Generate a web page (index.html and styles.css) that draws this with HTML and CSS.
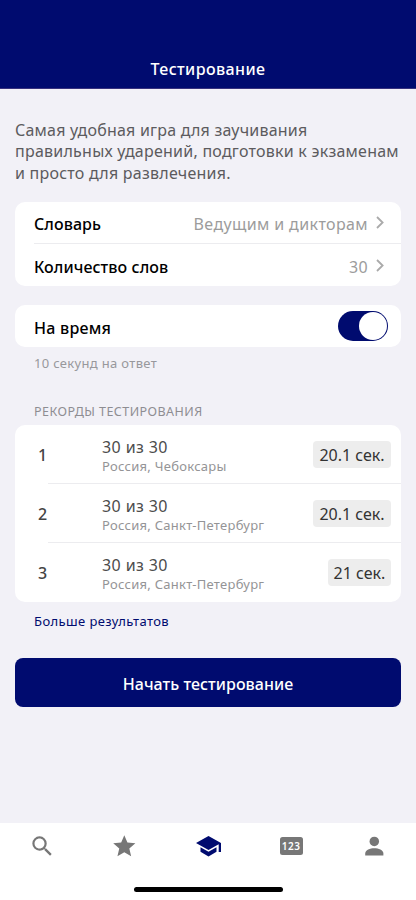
FILE: index.html
```html
<!DOCTYPE html>
<html lang="ru">
<head>
<meta charset="utf-8">
<meta name="viewport" content="width=device-width, initial-scale=1">
<title>Тестирование</title>
<link rel="stylesheet" href="styles.css">
</head>
<body>
<header class="header"><h1 class="title">Тестирование</h1></header>
<main class="content">
  <p class="intro"><span class="l1">Самая удобная игра для заучивания</span><br><span class="l2">правильных ударений, подготовки к экзаменам</span><br><span class="l3">и просто для развлечения.</span></p>
  <section class="card settings">
    <div class="row"><span class="label">Словарь</span><span class="value">Ведущим и дикторам</span><svg class="chevron" viewBox="0 0 8 13"><path d="M1 1l5.6 5.5L1 12"/></svg></div>
    <div class="row"><span class="label">Количество слов</span><span class="value">30</span><svg class="chevron" viewBox="0 0 8 13"><path d="M1 1l5.6 5.5L1 12"/></svg></div>
  </section>
  <section class="card timed"><span class="label time">На время</span><span class="switch"><span class="knob"></span></span></section>
  <p class="hint">10 секунд на ответ</p>
  <h2 class="heading">РЕКОРДЫ ТЕСТИРОВАНИЯ</h2>
  <section class="card records">
    <div class="record"><span class="rank">1</span><div class="result"><div class="score">30 из 30</div><div class="place">Россия, Чебоксары</div></div><span class="badge">20.1 сек.</span></div>
    <div class="record"><span class="rank">2</span><div class="result"><div class="score">30 из 30</div><div class="place">Россия, Санкт-Петербург</div></div><span class="badge">20.1 сек.</span></div>
    <div class="record"><span class="rank">3</span><div class="result"><div class="score">30 из 30</div><div class="place">Россия, Санкт-Петербург</div></div><span class="badge short">21 сек.</span></div>
  </section>
  <a class="more">Больше результатов</a>
  <button class="start">Начать тестирование</button>
</main>
<nav class="tabs">
  <div class="tab-row">
    <span class="tab"><svg viewBox="0 0 24 24"><path d="M15.5 14h-.79l-.28-.27A6.47 6.47 0 0 0 16 9.5 6.5 6.5 0 1 0 9.5 16c1.61 0 3.09-.59 4.23-1.57l.27.28v.79l5 4.99L20.49 19l-4.99-5zm-6 0C7.01 14 5 11.99 5 9.5S7.01 5 9.5 5 14 7.01 14 9.5 11.99 14 9.5 14z"/></svg></span>
    <span class="tab"><svg viewBox="0 0 24 24"><path d="M12 17.27L18.18 21l-1.64-7.03L22 9.24l-7.19-.61L12 2 9.19 8.63 2 9.24l5.46 4.73L5.82 21z"/></svg></span>
    <span class="tab active"><svg viewBox="0 0 25 21"><path d="M12.5 0L0 7l12.5 7 10.2-5.7V16H25V7zM4.5 11.3v4.5l8 4.7 8-4.7v-4.5l-8 4.5z"/></svg></span>
    <span class="tab"><span class="digits">123</span></span>
    <span class="tab"><svg viewBox="0 0 24 24"><circle cx="12" cy="7.6" r="4.3"/><path d="M3.8 20.3v-1.8c0-3.1 4.4-4.7 8.2-4.7s8.2 1.6 8.2 4.7v1.8z"/></svg></span>
  </div>
  <div class="home"></div>
</nav>
</body>
</html>
```
FILE: styles.css
```css
* { box-sizing: border-box; }
body {
  margin: 0;
  height: 900px;
  display: flex;
  flex-direction: column;
  background: #f2f1f7;
  font-family: "Noto Sans", sans-serif;
  font-size: 16px;
  overflow: hidden;
}
h1, h2, p { margin: 0; }
.header {
  height: 89px;
  padding-top: 57px;
  background: #000b6f;
  border-bottom: 1px solid #37327e;
  color: #fff;
  text-align: center;
}
.title { font-size: 16px; line-height: 24px; font-weight: 500; letter-spacing: .4px; }
.content { flex: 1; padding: 31px 15px 0; display: flex; flex-direction: column; }
.intro { color: #5c5b5e; font-size: 16px; line-height: 21.4px; height: 82px; font-weight: 400; letter-spacing: .24px; white-space: nowrap; }
.l1 { letter-spacing: .21px; }
.card { background: #fff; border-radius: 10px; flex: none; }
.settings { height: 84px; padding-left: 19px; }
.row { height: 42px; display: flex; align-items: center; padding: 2px 17px 0 0; }
.row + .row { height: 43px; margin-top: -1px; padding-top: 3px; border-top: 1px solid #ececef; }
.label { color: #000; font-size: 16px; font-weight: 500; letter-spacing: .08px; line-height: 22px; white-space: nowrap; }
.value { margin-left: auto; color: #9c9c9c; font-size: 16px; letter-spacing: .38px; white-space: nowrap; }
.chevron { width: 8px; height: 13px; margin: -4px 0 0 8px; fill: none; stroke: #aaa; stroke-width: 1.8; }
.row + .row .chevron { margin-top: -3px; }
.timed { height: 42px; margin-top: 19px; padding: 0 13px 0 19px; display: flex; align-items: center; justify-content: space-between; }
.time { padding-top: 3px; letter-spacing: .25px; }
.switch { width: 50px; height: 30px; border-radius: 15px; background: #000b6f; display: flex; justify-content: flex-end; padding: 1px; }
.knob { width: 28px; height: 28px; border-radius: 50%; background: #fff; }
.hint { margin: 7px 0 0 19px; font-size: 13px; line-height: 18px; letter-spacing: .33px; color: #98989c; }
.heading { margin: 30px 0 4px 19px; font-size: 12.5px; line-height: 19px; font-weight: 400; letter-spacing: .45px; color: #8e8d92; }
.records { height: 177px; }
.record { height: 59px; display: flex; align-items: center; padding: 2px 10px 0 23px; background: linear-gradient(#ececef, #ececef) 33px 100% / 100% 1px no-repeat; }
.record:last-child { background: none; }
.rank { width: 64px; margin-top: -2px; color: #444; font-weight: 500; }
.score { font-size: 16px; line-height: 20px; color: #4c4c4c; letter-spacing: .4px; }
.place { font-size: 13px; line-height: 18px; letter-spacing: .27px; color: #949496; white-space: nowrap; }
.badge { margin: -3px 0 0 auto; width: 78px; height: 27px; border-radius: 4px; background: #ededed; color: #333; font-size: 16px; letter-spacing: 0; line-height: 29px; text-align: center; white-space: nowrap; }
.badge.short { width: 63px; }
.more { margin: 10px 0 0 19px; color: #000b6f; font-size: 13px; line-height: 18px; letter-spacing: .4px; }
.start { margin: 28px 0 0; height: 49px; border: 0; border-radius: 8px; background: #000b6f; color: #fff; font: 500 16px/24px "Noto Sans", sans-serif; letter-spacing: .05px; padding: 2px 0 0; }
.tabs { height: 77px; background: #fff; display: flex; flex-direction: column; align-items: center; }
.tab-row { width: 100%; height: 47px; display: grid; grid-template-columns: repeat(5, 1fr); }
.tab { display: flex; align-items: center; justify-content: center; color: #777; }
.tab svg { width: 26.6px; height: 26.6px; fill: currentColor; }
.tab:first-child svg { margin-left: 1px; }
.tab.active { color: #000b6f; }
.tab.active svg { width: 25px; height: 21px; margin-left: 1px; }
.digits { width: 23px; height: 18px; margin-top: -1px; border-radius: 2.5px; background: #777; color: #fff; font: 600 10px/18px "Noto Sans", sans-serif; letter-spacing: .5px; text-align: center; }
.home { margin-top: 17px; width: 149px; height: 5px; border-radius: 3px; background: #000; }
```
